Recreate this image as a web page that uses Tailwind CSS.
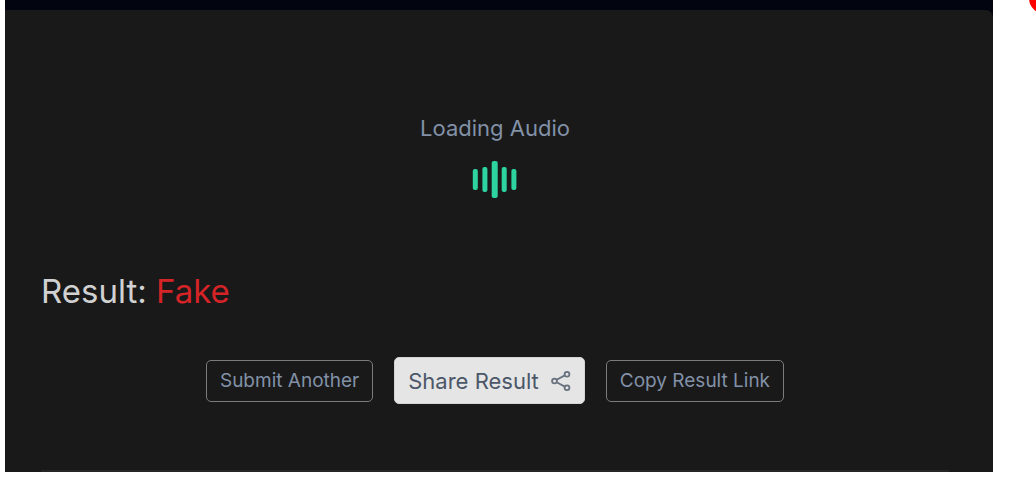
<!DOCTYPE html>
<html lang="en">
<head>
<meta charset="utf-8">
<meta name="viewport" content="width=device-width, initial-scale=1">
<title>Audio result</title>
<script src="https://cdn.jsdelivr.net/npm/@tailwindcss/browser@4"></script>
</head>
<body class="bg-white font-['Inter',sans-serif] overflow-hidden">
<div class="relative pl-[5px] pr-[43px]">
  <div class="bg-[#020510] pt-[10px]">
    <main class="bg-[#19191a] rounded-tr-lg pl-9 pr-11 flex flex-col">
      <section class="pt-[104px] flex flex-col items-center gap-2">
        <p class="text-[22px] leading-7 text-[#8291a7]">Loading Audio</p>
        <svg class="w-12 h-[60px]" viewBox="0 0 48 60" fill="#2dd4a0" role="img" aria-label="Loading">
          <rect x="1.8" y="19" width="5" height="21" rx="2"/>
          <rect x="11.4" y="17" width="5" height="25" rx="2"/>
          <rect x="20.7" y="11" width="6" height="37" rx="2"/>
          <rect x="30.7" y="17" width="5" height="25" rx="2"/>
          <rect x="40.4" y="19" width="5" height="21" rx="2"/>
        </svg>
      </section>
      <h1 class="mt-[61px] text-[33px] leading-10 text-[#d1d1d1]">Result: <span class="text-[#d42427]">Fake</span></h1>
      <div class="mt-[46px] flex items-center justify-center gap-[21px]">
        <button type="button" class="h-[42px] px-[13px] border border-[#7b7b7c] rounded-[5px] text-[19px] leading-7 text-[#8291a7] whitespace-nowrap">Submit Another</button>
        <button type="button" class="h-[47px] px-[13px] bg-[#e5e5e5] border border-[#d4d4d4] rounded-[5px] text-[22px] leading-7 text-[#4b5768] whitespace-nowrap flex items-center gap-3">Share Result
          <svg class="w-5 h-[22px]" viewBox="0 0 20 22" fill="none" stroke="#68727f" stroke-width="1.8" aria-hidden="true">
            <circle cx="3.5" cy="11" r="2.4"/><circle cx="16" cy="4.2" r="2.4"/><circle cx="16" cy="17.8" r="2.4"/>
            <path d="M5.7 9.8 13.8 5.4M5.7 12.2l8.1 4.4"/>
          </svg>
        </button>
        <button type="button" class="h-[42px] px-[13px] border border-[#7b7b7c] rounded-[5px] text-[19px] leading-7 text-[#8291a7] whitespace-nowrap">Copy Result Link</button>
      </div>
      <div class="mt-[66px] h-0.5 bg-[#282526]"></div>
    </main>
  </div>
  <div class="absolute -right-[25px] -top-[18px] w-8 h-8 rounded-full bg-[#ff0000]" aria-hidden="true"></div>
</div>
</body>
</html>
